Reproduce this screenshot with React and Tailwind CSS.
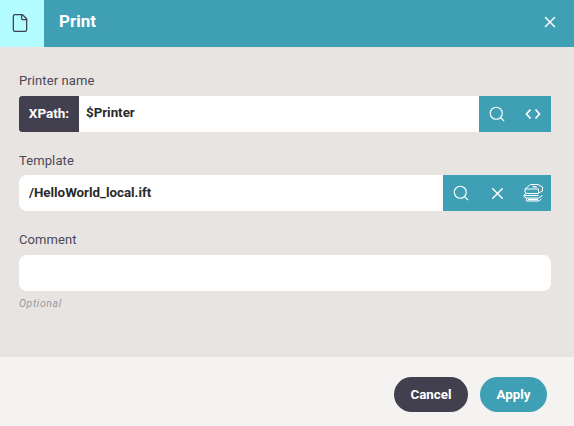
import { File, Search, X } from 'lucide-react';

function IconButton({ children }) {
  return <button className="w-9 h-9 flex items-center justify-center text-white">{children}</button>;
}

function CodeIcon() {
  return (
    <svg width="18" height="18" viewBox="0 0 18 18" fill="none" stroke="currentColor" strokeWidth="1.7">
      <path d="M6.5 4.5 2.5 9l4 4.5" />
      <path d="M11.5 4.5l4 4.5-4 4.5" />
    </svg>
  );
}

function TemplatesIcon() {
  return (
    <svg width="20" height="18" viewBox="0 0 20 18" fill="none" stroke="currentColor" strokeWidth="1" strokeLinejoin="miter">
      <path d="M7.5.5h7.5l4.5 2.5v4l-4 2" />
      <path d="M7.5.5 2 5v3l2 1.5h11.5V5H2" />
      <path d="M9 2h4l1.5 1.5h-4z" fill="currentColor" stroke="none" />
      <path d="M3 9.5 1 11v1.5L3 14h12.5l4-2.5" />
      <path d="M1.5 11.5h14" />
      <path d="M3.5 14v3h12.5l2.5-2.5" />
      <path d="M5 15.5h10" strokeWidth="1.6" />
    </svg>
  );
}

function Label({ className, children }) {
  return <div className={`text-[13px] leading-4 text-[#4b4858] tracking-[0.1px] ${className}`}>{children}</div>;
}

export default function App() {
  return (
    <div className="w-[574px] h-[426px] flex flex-col bg-[#e8e4e1] font-['Roboto',sans-serif] overflow-hidden">
      {/* Header */}
      <div className="h-[47px] flex bg-[#3fa0b5] shrink-0">
        <div className="w-11 h-full flex items-center justify-center pr-[5px] pb-[1px] bg-[#b3fcff] text-[#423f4f]">
          <File size={20} strokeWidth={1.5} />
        </div>
        <div className="ml-[15px] flex-1 flex items-center pb-[4px] text-[17px] font-bold text-white">Print</div>
        <div className="w-[49px] flex items-center justify-center pb-[3px] text-white">
          <X size={18} strokeWidth={2} />
        </div>
      </div>

      {/* Form */}
      <div className="flex-1 pl-[19px] pt-[26px] pr-[23px]">
        <Label className="mb-[7px]">Printer name</Label>
        <div className="flex h-9 bg-white mb-[21px]">
          <div className="w-[60px] flex items-center justify-center pb-[2px] bg-[#423f4f] rounded-l-[3px] text-[13.5px] font-bold text-white">XPath:</div>
          <div className="flex-1 flex items-center pl-[7px] pb-[2px] text-[13.33px] font-bold text-[#2a2a2a]">$Printer</div>
          <div className="flex bg-[#3fa0b5]">
            <IconButton><Search size={18} strokeWidth={1.5} /></IconButton>
            <IconButton><CodeIcon /></IconButton>
          </div>
        </div>

        <Label className="mb-[6px]">Template</Label>
        <div className="flex h-9 bg-white rounded-l-lg mb-[21px]">
          <div className="flex-1 flex items-center pl-[10px] text-[13.33px] font-bold text-[#2a2a2a]">/HelloWorld_local.ift</div>
          <div className="flex bg-[#3fa0b5]">
            <IconButton><Search size={18} strokeWidth={1.5} /></IconButton>
            <IconButton><X size={19} strokeWidth={1.7} /></IconButton>
            <IconButton><TemplatesIcon /></IconButton>
          </div>
        </div>

        <Label className="mb-[7px]">Comment</Label>
        <div className="h-9 bg-white rounded-lg" />
        <div className="mt-[7px] text-[10.5px] leading-3 italic tracking-[0.6px] text-[#9b98a0]">Optional</div>
      </div>

      {/* Footer */}
      <div className="h-[69px] shrink-0 bg-[#f4f3f1] flex justify-end gap-3 pt-5 pr-[27px]">
        <button className="w-[74px] h-[35px] rounded-full bg-[#423f4f] text-[13.33px] font-bold text-white">Cancel</button>
        <button className="w-[67px] h-[35px] rounded-full bg-[#3fa0b5] text-[13.33px] font-bold text-white">Apply</button>
      </div>
    </div>
  );
}
